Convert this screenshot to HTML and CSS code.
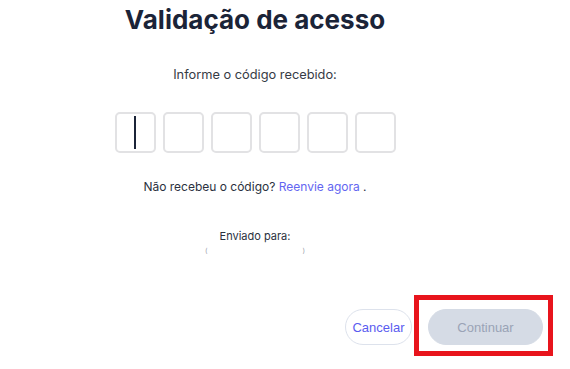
FILE: index.html
```html
<!DOCTYPE html>
<html lang="pt-BR">
<head>
<meta charset="utf-8">
<title>Validação de acesso</title>
<link rel="stylesheet" href="styles.css">
</head>
<body>
<div class="page">
  <main class="content">
    <h1 class="title">Validação de acesso</h1>
    <p class="prompt">Informe o código recebido:</p>
    <div class="code">
      <div class="digit active"><span class="caret"></span></div>
      <div class="digit"></div>
      <div class="digit"></div>
      <div class="digit"></div>
      <div class="digit"></div>
      <div class="digit"></div>
    </div>
    <p class="resend">Não recebeu o código? <a class="link" href="#">Reenvie agora</a> .</p>
    <p class="sent">Enviado para:</p>
    <p class="dest"><span>(</span><span>)</span></p>
  </main>
  <footer class="actions">
    <button class="btn btn-outline">Cancelar</button>
    <div class="highlight-wrap">
      <button class="btn btn-disabled" disabled>Continuar</button>
      <span class="highlight"></span>
    </div>
  </footer>
</div>
</body>
</html>
```
FILE: styles.css
```css
html, body {
  margin: 0;
  padding: 0;
  background: #ffffff;
}
body {
  font-family: "Inter", "Liberation Sans", sans-serif;
  color: #2b3140;
  width: 570px;
  height: 369px;
  overflow: hidden;
}
.page {
  display: flex;
  flex-direction: column;
}
.content {
  width: 510px;
  display: flex;
  flex-direction: column;
  align-items: center;
}
.title {
  margin: 4px 0 0;
  font-size: 26px;
  font-weight: 700;
  color: #1b2438;
  letter-spacing: 0;
  line-height: 32px;
}
.prompt {
  margin: 31px 0 0;
  font-size: 12.8px;
  line-height: 16px;
  color: #363b45;
}
.code {
  margin-top: 29px;
  display: flex;
  gap: 7px;
}
.digit {
  width: 37px;
  height: 37px;
  border: 2px solid #e2e2e4;
  border-radius: 5px;
  display: flex;
  align-items: center;
  justify-content: center;
}
.caret {
  display: block;
  width: 2px;
  height: 33px;
  background: #1b2438;
  margin-left: -1px;
}
.resend {
  margin: 26px 0 0;
  font-size: 12px;
  line-height: 16px;
  color: #2b3140;
}
.link {
  color: #6366f1;
  text-decoration: none;
}
.sent {
  margin: 34px 0 0;
  font-size: 11px;
  line-height: 14px;
  color: #2b3140;
}
.dest {
  margin: 4px 0 0;
  width: 100px;
  display: flex;
  justify-content: space-between;
  font-size: 7px;
  line-height: 8px;
  color: #9aa0aa;
}
.actions {
  margin-top: 54px;
  padding-right: 27px;
  display: flex;
  justify-content: flex-end;
  align-items: center;
  gap: 16px;
}
.btn {
  font-family: "Liberation Sans", Arial, sans-serif;
  font-size: 13px;
  height: 36px;
  border-radius: 18px;
  padding: 0;
  cursor: pointer;
}
.btn-outline {
  width: 67px;
  background: #ffffff;
  border: 1px solid #dde2ec;
  color: #5a5cf0;
}
.btn-disabled {
  width: 115px;
  background: #d5dbe5;
  border: 1px solid #d5dbe5;
  color: #9aa3b6;
  cursor: default;
}
.highlight-wrap {
  position: relative;
  display: flex;
}
.highlight {
  position: absolute;
  left: -14px;
  right: -10px;
  top: -14px;
  bottom: -11px;
  border: 5px solid #e8141c;
}
```
